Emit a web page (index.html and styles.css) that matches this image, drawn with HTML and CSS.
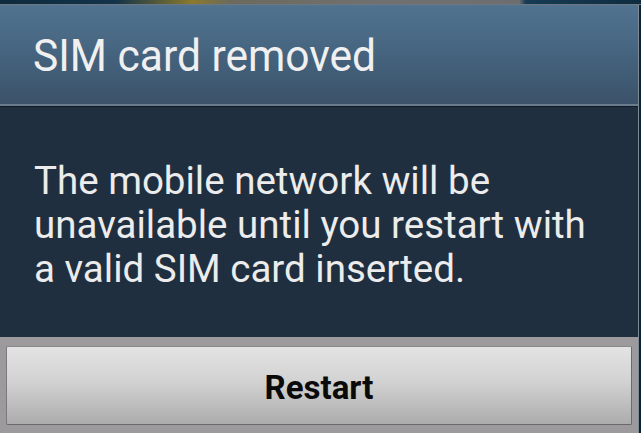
FILE: index.html
```html
<!DOCTYPE html>
<html>
<head>
<meta charset="utf-8">
<link rel="stylesheet" href="styles.css">
</head>
<body>
<div class="screen">
  <div class="wallpaper"></div>
  <div class="dialog">
    <div class="title-bar"><h1 class="title">SIM card removed</h1></div>
    <div class="divider"></div>
    <div class="content">
      <p class="message">The mobile network will be unavailable until you restart with a valid SIM card inserted.</p>
    </div>
    <div class="buttons">
      <button class="btn">Restart</button>
    </div>
  </div>
</div>
</body>
</html>
```
FILE: styles.css
```css
html, body {
  margin: 0;
  padding: 0;
  width: 641px;
  height: 433px;
  overflow: hidden;
  background: #0d2233;
}
.screen {
  display: flex;
  flex-direction: column;
  height: 433px;
}
.wallpaper {
  height: 4px;
  background: linear-gradient(90deg, #0e2a3e 0%, #12334a 18%, #8a7a2c 30%, #6c6a5e 36%, #707070 60%, #6e6e70 81%, #163b54 82%, #0f2c40 100%);
  border-bottom: 1px solid #6f7780;
}
.dialog {
  flex: 1;
  display: flex;
  flex-direction: column;
  width: 638px;
  border-right: 1px solid #7d8a96;
}
.title-bar {
  height: 99px;
  background: linear-gradient(180deg, #517390 0%, #466580 45%, #3b5269 100%);
  display: flex;
  align-items: center;
  padding-left: 33px;
}
.title {
  margin: 0;
  font-family: Roboto, "Liberation Sans", sans-serif;
  font-weight: 400;
  font-size: 45px;
  color: #f0f0f0;
  transform: scaleX(0.945);
  transform-origin: left center;
  white-space: nowrap;
  position: relative;
  top: 1px;
}
.divider {
  height: 2px;
  background: #6a7d8e;
  border-bottom: 1px solid #111b24;
}
.content {
  flex: 0 0 230px;
  background: #1f2f3f;
  padding: 0 0 0 34px;
  display: flex;
  align-items: center;
  overflow: hidden;
}
.message {
  margin: 0;
  flex: 0 0 572px;
  font-family: Roboto, "Liberation Sans", sans-serif;
  font-size: 38.5px;
  line-height: 44px;
  color: #ececec;
  position: relative;
  top: 3px;
}
.buttons {
  flex: 1;
  background: #9c9a9c;
  padding: 9px 6px 8px 6px;
  display: flex;
}
.btn {
  flex: 1;
  margin: 0;
  background: linear-gradient(180deg, #e3e3e3 0%, #d2d2d2 45%, #acacac 100%);
  border: 1px solid #6a6a6a;
  border-top-color: #8a8a8a;
  border-left-color: #7a7a7a;
  border-radius: 2px;
  font-family: Roboto, "Liberation Sans", sans-serif;
  font-weight: 700;
  font-size: 33px;
  color: #0a0a0a;
  padding: 4px 0 0 0;
}
```
